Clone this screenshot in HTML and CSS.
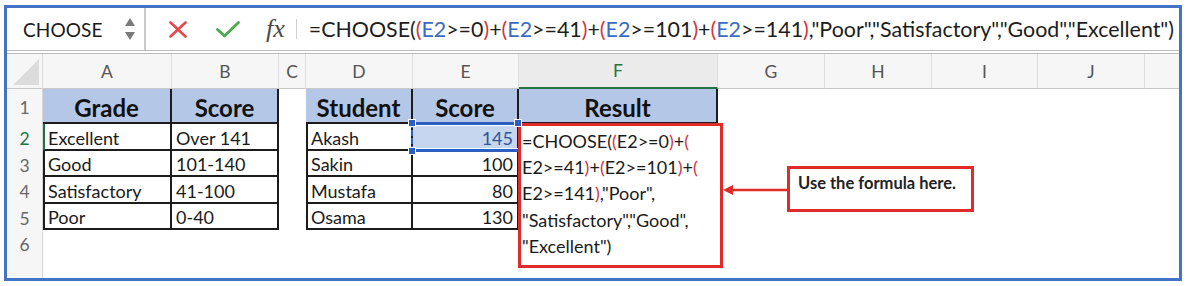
FILE: index.html
```html
<!DOCTYPE html>
<html>
<head>
<meta charset="utf-8">
<link rel="stylesheet" href="styles.css">
</head>
<body>
<div class="frame">
  <div class="fbar">
    <div class="namebox">
      <span class="namebox-text">CHOOSE</span>
      <svg class="stepper" width="10" height="24" viewBox="0 0 10 24"><path d="M5 1 L10 9 L0 9 Z" fill="#7a7a7a"/><path d="M0 15 L10 15 L5 23 Z" fill="#7a7a7a"/></svg>
    </div>
    <svg class="ico-x" width="18" height="17" viewBox="0 0 18 17"><path d="M1.5 1.5 L16.5 15.5 M16.5 1.5 L1.5 15.5" stroke="#e4484d" stroke-width="2.6" stroke-linecap="round"/></svg>
    <svg class="ico-ok" width="24" height="17" viewBox="0 0 24 17"><path d="M1.5 8.5 L8.5 15 L22.5 1.5" stroke="#4aaa4f" stroke-width="2.8" fill="none" stroke-linecap="round" stroke-linejoin="round"/></svg>
    <span class="ico-fx">fx</span>
    <span class="fsep"></span>
    <div class="formula">=CHOOSE(<span class="r">(</span><span class="b">E2</span>&gt;=0<span class="r">)</span>+<span class="r">(</span><span class="b">E2</span>&gt;=41<span class="r">)</span>+<span class="r">(</span><span class="b">E2</span>&gt;=101<span class="r">)</span>+<span class="r">(</span><span class="b">E2</span>&gt;=141<span class="r">)</span>,"Poor","Satisfactory","Good","Excellent")</div>
  </div>
  <div class="sheet">
    <div class="corner"><svg width="26" height="26" viewBox="0 0 26 26"><path d="M26 0 L26 26 L0 26 Z" fill="#dcdcdc"/></svg></div>
    <div class="ch">A</div><div class="ch">B</div><div class="ch">C</div><div class="ch">D</div><div class="ch">E</div><div class="ch ch-act">F</div><div class="ch">G</div><div class="ch">H</div><div class="ch">I</div><div class="ch">J</div><div class="ch ch-last"></div>

    <div class="rh">1</div>
    <div class="c hd">Grade</div><div class="c hd">Score</div><div class="e"></div>
    <div class="c hd">Student</div><div class="c hd">Score</div><div class="c hd">Result</div>
    <div class="e"></div><div class="e"></div><div class="e"></div><div class="e"></div><div class="e"></div>

    <div class="rh rh-act">2</div>
    <div class="c l l-act">Excellent</div><div class="c">Over 141</div><div class="e"></div>
    <div class="c l">Akash</div><div class="c n sel">145</div><div class="c"></div>
    <div class="e"></div><div class="e"></div><div class="e"></div><div class="e"></div><div class="e"></div>

    <div class="rh">3</div>
    <div class="c l">Good</div><div class="c">101-140</div><div class="e"></div>
    <div class="c l">Sakin</div><div class="c n">100</div><div class="c"></div>
    <div class="e"></div><div class="e"></div><div class="e"></div><div class="e"></div><div class="e"></div>

    <div class="rh">4</div>
    <div class="c l">Satisfactory</div><div class="c">41-100</div><div class="e"></div>
    <div class="c l">Mustafa</div><div class="c n">80</div><div class="c"></div>
    <div class="e"></div><div class="e"></div><div class="e"></div><div class="e"></div><div class="e"></div>

    <div class="rh">5</div>
    <div class="c l">Poor</div><div class="c">0-40</div><div class="e"></div>
    <div class="c l">Osama</div><div class="c n">130</div><div class="c"></div>
    <div class="e"></div><div class="e"></div><div class="e"></div><div class="e"></div><div class="e"></div>

    <div class="rh">6</div>
    <div class="e span11"></div>

    <div class="rh rh-end"></div>
    <div class="e span11"></div>

    <div class="selbox">
      <span class="hdl hdl-tl"></span><span class="hdl hdl-bl"></span>
    </div>
    <span class="hdl hdl-tr"></span>

    <div class="redbox">=CHOOSE(<span class="r">(</span>E2&gt;=0<span class="r">)</span>+<span class="r">(</span><br>E2&gt;=41<span class="r">)</span>+<span class="r">(</span>E2&gt;=101<span class="r">)</span>+<span class="r">(</span><br>E2&gt;=141<span class="r">)</span>,"Poor",<br>"Satisfactory","Good",<br>"Excellent")</div>

    <svg class="arrow" width="66" height="16" viewBox="0 0 66 16"><path d="M66 8 L8 8" stroke="#e02b2b" stroke-width="2.5"/><path d="M0 8 L10 3 L10 13 Z" fill="#e02b2b"/></svg>
    <div class="callout">Use the formula here.</div>
  </div>
</div>
</body>
</html>
```
FILE: styles.css
```css
html, body {
  margin: 0;
  padding: 0;
  background: #ffffff;
}
body {
  font-family: Lato, "Liberation Sans", sans-serif;
  color: #1d1d1d;
}
.frame {
  margin: 5px 0 0 4px;
  width: 1172px;
  height: 270px;
  border: 3px solid #4472c4;
  display: flex;
  flex-direction: column;
  overflow: hidden;
}
.fbar {
  height: 42px;
  flex: none;
  display: flex;
  align-items: center;
  border-bottom: 4px double #bcbcbc;
  background: #ffffff;
}
.namebox {
  width: 139px;
  height: 100%;
  box-sizing: border-box;
  padding: 0 9px 0 16px;
  display: flex;
  align-items: center;
  justify-content: space-between;
  border-right: 2px solid #c9c9c9;
}
.namebox-text {
  font-size: 19px;
  color: #1a1a1a;
  letter-spacing: 0.1px;
}
.ico-x { margin-left: 23px; }
.ico-ok { margin-left: 29px; }
.ico-fx {
  margin-left: 26px;
  font-family: "Liberation Serif", serif;
  font-style: italic;
  font-size: 26px;
  color: #4a4a4a;
  line-height: 1;
}
.fsep {
  width: 1px;
  height: 20px;
  background: #d0d0d0;
  margin-left: 11px;
}
.formula {
  margin-left: 12px;
  font-size: 21.4px;
  color: #1d1d1d;
  white-space: nowrap;
}
.formula .r, .redbox .r { color: #d2343c; }
.formula .b { color: #3a6bc4; }

.sheet {
  flex: 1;
  position: relative;
  display: grid;
  grid-template-columns: 36px 129px 107px 27px 107px 106px 199px 107px 107px 106px 107px 1fr;
  grid-template-rows: 35px 35px 27px 26px 27px 26px 27px 1fr;
}
.corner {
  background: #f6f6f6;
  border-bottom: 1px solid #c8c8c8;
  border-right: 1px solid #dcdcdc;
  box-sizing: border-box;
  display: flex;
  align-items: flex-end;
  justify-content: flex-end;
  padding: 0 3px 3px 0;
}
.ch {
  background: #f6f6f6;
  border-bottom: 1px solid #c8c8c8;
  border-right: 1px solid #dedede;
  box-sizing: border-box;
  display: flex;
  align-items: center;
  justify-content: center;
  font-size: 17.5px;
  color: #555555;
}
.ch-act {
  background: #ebebeb;
  color: #217346;
  border-bottom: 2px solid #217346;
}
.ch-last { border-right: none; }
.rh {
  background: #f6f6f6;
  border-right: 1px solid #d6d6d6;
  box-sizing: border-box;
  display: flex;
  align-items: center;
  justify-content: center;
  padding-top: 2px;
  font-size: 17.5px;
  color: #666666;
}
.rh-act {
  color: #217346;
}
.rh-end { background: #f6f6f6; }
.e { background: #ffffff; }
.span11 { grid-column: span 11; }
.c {
  box-sizing: border-box;
  border-right: 2px solid #1c1c1c;
  border-bottom: 2px solid #1c1c1c;
  display: flex;
  align-items: center;
  padding: 2px 4px 0 4px;
  font-size: 18px;
  color: #1a1a1a;
  white-space: nowrap;
  overflow: hidden;
}
.l { border-left: 2px solid #1c1c1c; padding-left: 3px; }
.l-act { border-left-color: #217346; }
.hd {
  background: #b4c7e7;
  justify-content: center;
  padding-top: 3px;
  font-weight: 700;
  font-size: 24px;
  color: #111111;
}
.n { justify-content: flex-end; }
.sel {
  background: #c7d6ef;
  color: #2f5597;
}
.selbox {
  position: absolute;
  left: 404px;
  top: 68px;
  width: 110px;
  height: 30px;
  box-sizing: border-box;
  border-top: 3px solid #2b5fc2;
  border-bottom: 3px solid #2b5fc2;
  border-left: 2px dashed #2b5fc2;
  box-shadow: inset 0 1px 0 #ffffff, inset 0 -1px 0 #ffffff;
}
.hdl {
  position: absolute;
  width: 6px;
  height: 6px;
  background: #2b5fc2;
  border: 1px solid #ffffff;
  z-index: 3;
}
.hdl-tl { left: -5px; top: -6px; }
.hdl-bl { left: -5px; bottom: -6px; }
.hdl-tr { left: 507px; top: 65px; }
.redbox {
  position: absolute;
  left: 511px;
  top: 69px;
  width: 205px;
  height: 145px;
  box-sizing: border-box;
  border: 3px solid #e02b2b;
  background: #ffffff;
  padding: 2px 0 0 1px;
  font-size: 18px;
  line-height: 26.2px;
  color: #1a1a1a;
  white-space: nowrap;
  z-index: 2;
}
.arrow {
  position: absolute;
  left: 716px;
  top: 128px;
}
.callout {
  position: absolute;
  left: 780px;
  top: 112px;
  width: 187px;
  height: 46px;
  box-sizing: border-box;
  border: 3px solid #e02b2b;
  background: #ffffff;
  padding: 4px 0 0 8px;
  font-size: 16.5px;
  font-weight: 700;
  color: #222222;
}
```
